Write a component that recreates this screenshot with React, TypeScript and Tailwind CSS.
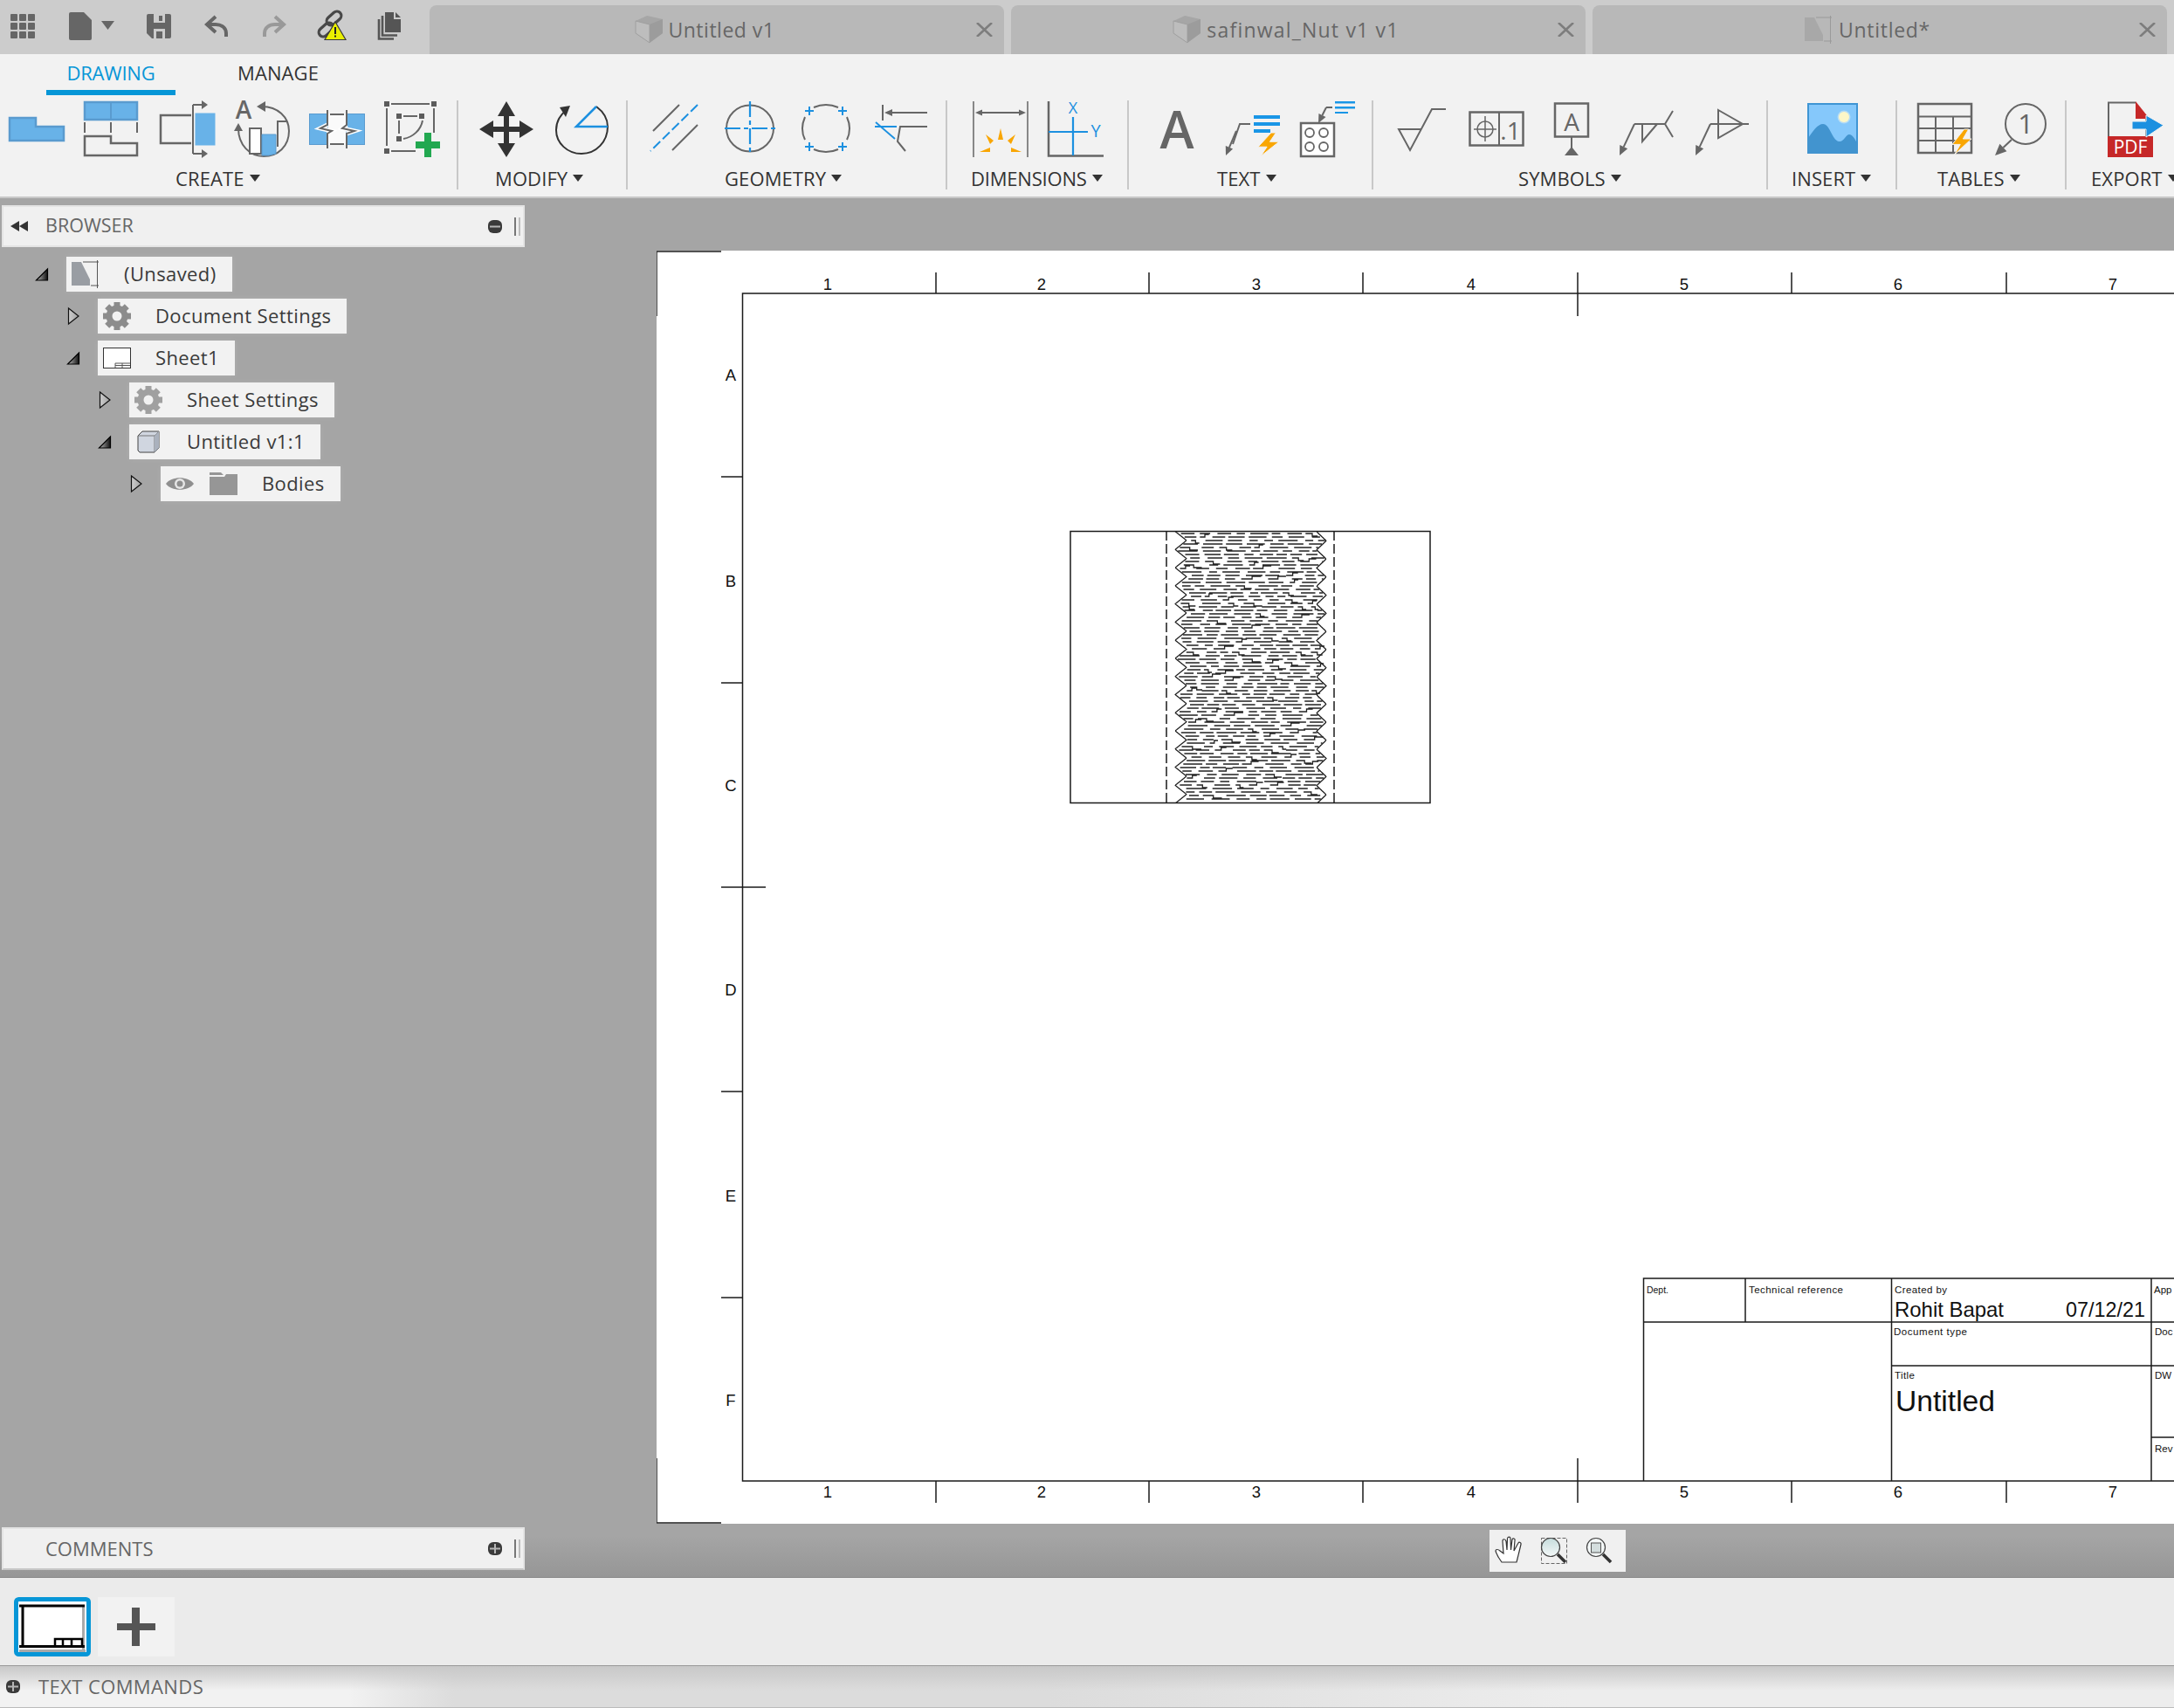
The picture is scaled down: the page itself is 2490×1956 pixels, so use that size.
import React from "react";

const GRAY = "#666666";
const BLUE = "#1c90e0";
const VIEW_BLUE = "#68b2e8";
const VIEW_EDGE = "#5a9bcf";
const ORANGE = "#f9a602";

// plain seeded random so the hatch looks the same on every run
const makeRandom = (seed: number) => () => {
  seed = (seed * 16807) % 2147483647;
  return seed / 2147483647;
};

const PITCH = 20.77;
const leftEdge = (y: number) => {
  const p = (((y - 629.3) % PITCH) + PITCH) % PITCH / PITCH;
  return 1346 + 26 * Math.min(p, 1 - p);
};
const rightEdge = (y: number) => {
  const p = (((y - 619.3) % PITCH) + PITCH) % PITCH / PITCH;
  return 1519 - 22 * Math.min(p, 1 - p);
};

const buildEdge = (edge: (y: number) => number) => {
  let d = "";
  for (let y = 608.5; y <= 919.5; y += 1) {
    d += `${d ? "L" : "M"}${edge(y).toFixed(1)} ${y} `;
  }
  return d;
};

const buildHatch = () => {
  const rnd = makeRandom(48271);
  let d = "";
  for (let y = 611; y < 919; y += 4) {
    const end = rightEdge(y) - 1;
    let x = leftEdge(y) + 1 + rnd() * 7;
    while (x < end) {
      const x2 = Math.min(x + 9 + rnd() * 14, end);
      const roll = rnd();
      const yy = y.toFixed(1);
      if (roll < 0.14 && x2 - x > 8) {
        const mid = x + (x2 - x) * 0.55;
        const step = rnd() < 0.5 ? 3 : -3;
        d += `M${x.toFixed(1)} ${yy}H${mid.toFixed(1)}v${step}H${x2.toFixed(1)}`;
      } else {
        d += `M${x.toFixed(1)} ${yy}H${x2.toFixed(1)}`;
      }
      x = x2 + 3 + rnd() * 6;
    }
  }
  return d;
};

const Leader = ({ x1, y1, x2, y2, color = GRAY, size = 10 }: { x1: number; y1: number; x2: number; y2: number; color?: string; size?: number }) => {
  const a = Math.atan2(y2 - y1, x2 - x1);
  const bx = x2 - Math.cos(a) * size;
  const by = y2 - Math.sin(a) * size;
  const nx = -Math.sin(a) * size * 0.45;
  const ny = Math.cos(a) * size * 0.45;
  return (
    <>
      <line x1={x1} y1={y1} x2={bx} y2={by} stroke={color} strokeWidth={2} />
      <polygon points={`${x2},${y2} ${bx + nx},${by + ny} ${bx - nx},${by - ny}`} fill={color} />
    </>
  );
};

const Bolt = ({ x, y, w, h }: { x: number; y: number; w: number; h: number }) => {
  const pts = [
    [0.62, 0],
    [0, 0.6],
    [0.42, 0.6],
    [0.12, 1],
    [1, 0.38],
    [0.56, 0.38],
    [0.85, 0],
  ]
    .map(([a, b]) => `${x + a * w},${y + b * h}`)
    .join(" ");
  return <polygon points={pts} fill={ORANGE} stroke="#f2f2f2" strokeWidth={1} />;
};

const Caret = () => (
  <svg width={12} height={10} viewBox="0 0 12 10" className="ml-[6px] shrink-0">
    <polygon points="0,1 12,1 6,9" fill="#333333" />
  </svg>
);

const Panel = ({ x, w, label, labelClass, children }: { x: number; w: number; label: string; labelClass: string; children: React.ReactNode }) => (
  <div className="flex flex-col shrink-0">
    <svg width={w} height={70} viewBox={`${x} 115 ${w} 70`} className="block font-['Open_Sans']">
      {children}
    </svg>
    <div className={`flex items-center h-[32px] mt-[3px] text-[22px] text-[#333333] whitespace-nowrap ${labelClass}`}>
      {label}
      <Caret />
    </div>
  </div>
);

const Sep = () => <div className="w-[2px] h-[102px] bg-[#c8c8c8] shrink-0" />;

const TopIcons = () => (
  <svg width={492} height={62} viewBox="0 0 492 62" className="block shrink-0">
    {[0, 1, 2].map((r) =>
      [0, 1, 2].map((c) => <rect key={`${r}${c}`} x={12 + c * 10} y={16 + r * 10} width={8} height={8} rx={1} fill={GRAY} />)
    )}
    <path d="M81 14H96L105 23V44A2 2 0 0 1 103 46H81A2 2 0 0 1 79 44V16A2 2 0 0 1 81 14Z" fill={GRAY} />
    <polygon points="116,24 131,24 123.5,34" fill={GRAY} />
    <path d="M170 16H194A2 2 0 0 1 196 18V42A2 2 0 0 1 194 44H174L168 38V18A2 2 0 0 1 170 16Z" fill={GRAY} />
    <rect x="176" y="16" width="13" height="10" fill="#cccccc" />
    <rect x="182" y="18" width="4" height="6" fill={GRAY} />
    <rect x="176" y="33" width="13" height="11" fill="#cccccc" />
    <rect x="179" y="36" width="7" height="8" fill={GRAY} />
    <path d="M259 42V38C259 32 254 28 247 28H238M247 19L237 28L247 37" fill="none" stroke={GRAY} strokeWidth="4" />
    <path d="M303 42V38C303 32 308 28 315 28H324M315 19L325 28L315 37" fill="none" stroke="#999999" strokeWidth="4" />
    <rect x="364" y="29" width="19" height="10" rx="5" fill="none" stroke="#484848" strokeWidth="3.200" transform="rotate(-42 373.500 34)" />
    <rect x="373" y="16" width="19" height="10" rx="5" fill="none" stroke="#484848" strokeWidth="3.200" transform="rotate(-42 382.500 21)" />
    <polygon points="384,25 396,45.500 372,45.500" fill="#e9f000" stroke="#3a3a3a" strokeWidth="1.200" />
    <rect x="383" y="31" width="2" height="8" fill="#222222" />
    <rect x="383" y="40.500" width="2" height="2" fill="#222222" />
    <path d="M441 14H451V22H459V37H441Z" fill="#555555" />
    <polygon points="453,14 459,20 453,20" fill="#555555" />
    <path d="M438 18V40.500H455M434 22V44.500H451" fill="none" stroke="#555555" strokeWidth="2.600" />
  </svg>
);

const CubeTabIcon = () => (
  <svg width={32} height={32} viewBox="0 0 32 32" className="shrink-0">
    <polygon points="1,6 14,0 32,4 32,20 17,31 1,20" fill="#a6a6a6" />
    <polygon points="1,6 17,10 17,31 1,20" fill="#bdbdbd" stroke="#a0a0a0" strokeWidth="1" />
    <polygon points="17,10 32,4 32,20 17,31" fill="#9c9c9c" />
  </svg>
);

const DrawingIcon = ({ fill, line }: { fill: string; line: string }) => (
  <svg width={32} height={32} viewBox="0 0 32 32" className="shrink-0">
    <polygon points="0,2 11,2 21,22 21,29 0,29" fill={fill} />
    <path d="M13 2H31M29.500 0V32M22 29H31" fill="none" stroke={line} strokeWidth="1" />
  </svg>
);

const CloseX = () => (
  <svg width={19} height={16} viewBox="0 0 19 16" className="shrink-0 mr-[13px]">
    <path d="M1 0L18 16M18 0L1 16" stroke="#7d7d7d" strokeWidth="2.600" />
  </svg>
);

const DocTab = ({ icon, title, titleClass }: { icon: React.ReactNode; title: string; titleClass: string }) => (
  <div className="w-[658px] h-[56px] shrink-0 flex items-center pl-[4px] bg-[#b8b8b8] rounded-t-[8px]">
    <div className="flex-1 flex items-center justify-center gap-[7px] text-[23px] text-[#666666]">
      {icon}
      <span className={titleClass}>{title}</span>
    </div>
    <CloseX />
  </div>
);

const Gear = ({ color }: { color: string }) => (
  <svg width={32} height={32} viewBox="0 0 32 32" className="shrink-0">
    {[0, 45, 90, 135, 180, 225, 270, 315].map((a) => (
      <rect key={a} x="12.500" y="0" width="7" height="8" fill={color} transform={`rotate(${a} 16 16)`} />
    ))}
    <circle cx="16" cy="16" r="9" fill="none" stroke={color} strokeWidth="7" />
  </svg>
);

const SheetIcon = () => (
  <svg width={32} height={24} viewBox="0 0 32 24" className="shrink-0">
    <rect x="0.500" y="0.500" width="31" height="23" fill="#ffffff" stroke="#333333" strokeWidth="1" />
    <path d="M14 23V18H31M14 20.500H31M22 18V23" fill="none" stroke="#555555" strokeWidth="1" />
  </svg>
);

const BodyIcon = () => (
  <svg width={26} height={26} viewBox="0 0 26 26" className="shrink-0 ml-[3px] mr-[3px]">
    <polygon points="1,6 6,1 25,1 25,20 20,25 3,25 1,23" fill="#d0d6e0" stroke="#444444" strokeWidth="1" />
    <path d="M1 6H20L25 1M20 6V25" fill="none" stroke="#777777" strokeWidth="1" />
    <polygon points="20,6 25,1 25,20 20,25" fill="#aab1bd" />
  </svg>
);

const EyeIcon = () => (
  <svg width={32} height={20} viewBox="0 0 32 20" className="shrink-0">
    <path d="M0 10C6 1 26 1 32 10C26 19 6 19 0 10Z" fill="#8f8f8f" />
    <circle cx="16" cy="10" r="6" fill="#e6e6e6" />
    <circle cx="16" cy="10" r="3.500" fill="#8f8f8f" />
  </svg>
);

const FolderIcon = () => (
  <svg width={32} height={26} viewBox="0 0 32 26" className="shrink-0">
    <path d="M0 0H13L16 3H0ZM0 5H17L19 2H32V26H0Z" fill="#969696" />
  </svg>
);

const TreeCaret = ({ open }: { open: boolean }) => (
  <svg width={36} height={40} viewBox="0 0 36 40" className="shrink-0">
    <defs>
      <linearGradient id="openFill" x1="0" y1="0" x2="1" y2="0">
        <stop offset="0" stopColor="#bbbbbb" />
        <stop offset="1" stopColor="#111111" />
      </linearGradient>
      <linearGradient id="closedFill" x1="0" y1="0" x2="1" y2="0">
        <stop offset="0" stopColor="#cfcfcf" />
        <stop offset="1" stopColor="#a0a0a0" />
      </linearGradient>
    </defs>
    {open ? (
      <polygon points="1.500,27 14.500,27 14.500,14" fill="url(#openFill)" stroke="#000000" strokeWidth="1.200" />
    ) : (
      <polygon points="2.500,11 14,20 2.500,29" fill="url(#closedFill)" stroke="#111111" strokeWidth="1.200" />
    )}
  </svg>
);

const TreeRow = ({ indent, open, icon, label }: { indent: string; open: boolean; icon: React.ReactNode; label: string }) => (
  <div className={`flex items-center h-[40px] ${indent}`}>
    <TreeCaret open={open} />
    <div className="flex items-center h-[40px] pl-[6px] pr-[18px] bg-[#f2f2f2] shadow-[0_0_6px_rgba(255,255,255,0.12)]">
      {icon}
      <span className="ml-[28px] pb-[2px] text-[22px] tracking-[0.4px] text-[#3a3a3a] whitespace-nowrap">{label}</span>
    </div>
  </div>
);

const Badge = ({ plus }: { plus: boolean }) => (
  <svg width={16} height={15} viewBox="0 0 16 15" className="shrink-0">
    <rect x="0" y="0" width="16" height="15" rx="6" fill="#3a3a3a" />
    <rect x="2" y="6.500" width="12" height="2" fill="#b5b5b5" />
    {plus && <rect x="7" y="2" width="2" height="11" fill="#b5b5b5" />}
  </svg>
);

const PanelHandle = () => (
  <div className="flex h-[21px] ml-[14px] gap-[3px]">
    <div className="w-[2px] bg-[#777777]" />
    <div className="w-[2px] bg-[#bdbdbd]" />
  </div>
);

const SheetDrawing = () => {
  const colX = [1072, 1316, 1561, 1807, 2052, 2298];
  const nums = [
    [948, "1"],
    [1193, "2"],
    [1439, "3"],
    [1685, "4"],
    [1929, "5"],
    [2174, "6"],
    [2420, "7"],
  ] as [number, string][];
  const rows = [
    [429, "A"],
    [665, "B"],
    [899, "C"],
    [1133, "D"],
    [1369, "E"],
    [1603, "F"],
  ] as [number, string][];
  const rowY = [546, 782, 1250, 1486];
  return (
    <svg width={1738} height={1458} viewBox="752 287 1738 1458" className="block bg-white font-['Liberation_Sans']">
      <g fill="none" stroke="#1a1a1a" strokeWidth="1.500">
        <path d="M826 288H752V362M752 1670V1744H826" />
        <path d="M2490 336H850.500V1696H2490" />
        {colX.map((x) => (
          <React.Fragment key={x}>
            <path d={x === 1807 ? `M${x} 312V362` : `M${x} 312V336`} />
            <path d={x === 1807 ? `M${x} 1670V1721` : `M${x} 1696V1721`} />
          </React.Fragment>
        ))}
        {rowY.map((y) => (
          <path key={y} d={`M826 ${y}H850`} />
        ))}
        <path d="M826 1016H877" />
        <rect x="1226" y="608.500" width="412" height="311" />
        <path d="M1336 608V920M1528 608V920" strokeDasharray="11 4" />
        <path d={buildEdge(leftEdge)} strokeWidth="1.200" />
        <path d={buildEdge(rightEdge)} strokeWidth="1.200" />
        <path d={buildHatch()} strokeWidth="1.300" stroke="#222222" />
        <path d="M1882.500 1696V1464H2490M1882.500 1514H2490M2166.500 1564H2490M2464 1646H2490M1999 1464V1514M2166.500 1464V1696M2464 1464V1696" />
      </g>
      <g fontSize="18.500" textAnchor="middle" fill="#111111">
        {nums.map(([x, t]) => (
          <React.Fragment key={t}>
            <text x={x} y={332}>{t}</text>
            <text x={x} y={1715}>{t}</text>
          </React.Fragment>
        ))}
        {rows.map(([y, t]) => (
          <text key={t} x={837} y={y + 7}>{t}</text>
        ))}
      </g>
      <g fill="#111111" fontSize="11.500">
        <text x={1886} y={1481} textLength={25} lengthAdjust="spacingAndGlyphs">Dept.</text>
        <text x={2003} y={1481} textLength={108}>Technical reference</text>
        <text x={2170} y={1481} textLength={60}>Created by</text>
        <text x={2169} y={1529} textLength={84}>Document type</text>
        <text x={2170} y={1579} textLength={23}>Title</text>
        <text x={2467} y={1481}>App</text>
        <text x={2468} y={1529}>Doc</text>
        <text x={2468} y={1579}>DW</text>
        <text x={2468} y={1663}>Rev</text>
        <text x={2170} y={1508} fontSize="24" textLength={125} lengthAdjust="spacingAndGlyphs">Rohit Bapat</text>
        <text x={2366} y={1508} fontSize="24" textLength={91} lengthAdjust="spacingAndGlyphs">07/12/21</text>
        <text x={2171} y={1616} fontSize="33" textLength={114} lengthAdjust="spacingAndGlyphs">Untitled</text>
      </g>
    </svg>
  );
};

const ZoomTools = () => (
  <div className="ml-[954px] mt-[7px] w-[156px] h-[48px] bg-[#f0f0f0]">
    <svg width={156} height={48} viewBox="1706 1752 156 48" className="block">
      <defs>
        <linearGradient id="glass" x1="0" y1="0" x2="0" y2="1">
          <stop offset="0" stopColor="#c5dcdc" />
          <stop offset="1" stopColor="#f4f8f8" />
        </linearGradient>
      </defs>
      <path
        d="M1720 1789C1717 1785 1714 1780 1713 1776C1713 1774 1716 1774 1718 1776L1722 1779L1721 1765C1721 1762 1724 1762 1725 1765L1726 1775L1726.500 1762C1727 1759.500 1730 1759.500 1730 1762L1730.500 1775L1732 1763C1733 1761 1735.500 1762 1735 1764L1734 1776L1739 1767C1740 1765.500 1742.500 1766.500 1742 1768.500C1741 1773 1739 1781 1738 1785L1737 1789Z"
        fill="#ffffff"
        stroke="#333333"
        strokeWidth="1.200"
      />
      <rect x="1765.500" y="1761.500" width="29" height="29" fill="none" stroke="#666666" strokeWidth="1" strokeDasharray="4 2" />
      <circle cx="1776" cy="1772" r="10.500" fill="url(#glass)" stroke="#444444" strokeWidth="1.200" />
      <path d="M1784 1780L1793 1789" stroke="#333333" strokeWidth="3.500" />
      <circle cx="1828" cy="1772" r="10.500" fill="#f4f8f8" stroke="#444444" strokeWidth="1.200" />
      <rect x="1822.500" y="1767" width="11" height="11" fill="#d4dede" stroke="#555555" strokeWidth="1" />
      <path d="M1836 1780L1845 1789" stroke="#333333" strokeWidth="3.500" />
    </svg>
  </div>
);

const SheetThumb = () => (
  <svg width={88} height={68} viewBox="0 0 88 68" className="block">
    <rect x="2.500" y="2.500" width="83" height="63" rx="3" fill="#ffffff" stroke="#0696d7" strokeWidth="5" />
    <rect x="78" y="10" width="3" height="50" fill="#aaaaaa" />
    <rect x="6" y="60" width="76" height="3" fill="#aaaaaa" />
    <path d="M6 10H81M10 10V56M6 56.500H81" fill="none" stroke="#000000" strokeWidth="3" />
    <path d="M47 56V48H78V56M56 48V56M66 48V56" fill="none" stroke="#000000" strokeWidth="2.500" />
  </svg>
);

const App = () => (
  <div className="w-[2490px] h-[1956px] overflow-hidden flex flex-col font-['Open_Sans',sans-serif] bg-[#a5a5a5]">
    {/* tab bar */}
    <div className="flex h-[62px] bg-[#cccccc] items-end shrink-0">
      <TopIcons />
      <div className="flex gap-[8px]">
        <DocTab icon={<CubeTabIcon />} title="Untitled v1" titleClass="tracking-[0.5px]" />
        <DocTab icon={<CubeTabIcon />} title="safinwal_Nut v1 v1" titleClass="tracking-[1.2px]" />
        <DocTab icon={<DrawingIcon fill="#a8a8a8" line="#9a9a9a" />} title="Untitled*" titleClass="tracking-[0.7px]" />
      </div>
    </div>

    {/* ribbon */}
    <div className="h-[165px] shrink-0 bg-[#f2f2f2] border-b-2 border-[#c8c8c8]">
      <div className="flex h-[53px] text-[22px]">
        <div className="ml-[53px] w-[148px] h-[47px] flex items-center justify-center pt-[1px] border-b-[6px] border-[#0696d7] text-[#0696d7] tracking-[-0.2px]">DRAWING</div>
        <div className="ml-[71px] h-[47px] flex items-center pt-[1px] pb-[6px] text-[#333333] tracking-[0.1px]">MANAGE</div>
      </div>
      <div className="flex">
        <Panel x={0} w={523} label="CREATE" labelClass="pl-[201px] tracking-[0.1px]">
          <polygon points="11,135 41,135 41,145 73,145 73,161 11,161" fill={VIEW_BLUE} stroke={VIEW_EDGE} strokeWidth="2.500" />
          <rect x="97" y="117" width="60" height="20" fill={VIEW_BLUE} stroke={VIEW_EDGE} strokeWidth="2.500" />
          <path d="M127 117V137" stroke={VIEW_EDGE} strokeWidth="2" />
          <path d="M97 140V152M127 140V152M157 140V152" stroke={GRAY} strokeWidth="2" />
          <polygon points="97,156 127,156 127,164 157,164 157,178 97,178" fill="none" stroke={GRAY} strokeWidth="2.500" />
          <path d="M219 132H184V164H219" fill="none" stroke={GRAY} strokeWidth="2.500" />
          <rect x="224" y="130" width="22" height="36" fill={VIEW_BLUE} stroke={VIEW_BLUE} />
          <path d="M221 120V176M221 120H233M221 176H233" fill="none" stroke={GRAY} strokeWidth="2" />
          <polygon points="231,115 238,120 231,125" fill={GRAY} />
          <polygon points="231,171 238,176 231,181" fill={GRAY} />
          <text x={279} y={136} fontSize="28" fontWeight="600" textAnchor="middle" fill={GRAY}>A</text>
          <path d="M300 122C318 122 331 134 331 150C331 168 318 179 302 179C286 179 273 166 273 147" fill="none" stroke={GRAY} strokeWidth="2" />
          <polygon points="294,122 304,116 304,128" fill={GRAY} />
          <polygon points="273,141 268,150 278,150" fill={GRAY} />
          <rect x="286" y="147" width="13" height="29" fill="#ffffff" stroke={GRAY} strokeWidth="2" />
          <polygon points="300,154 316,154 316,176 308,178 300,178" fill={VIEW_BLUE} stroke={VIEW_EDGE} />
          <path d="M318 168V139H329" fill="none" stroke={GRAY} strokeWidth="2" />
          <rect x="354.500" y="130.500" width="21" height="35" fill={VIEW_BLUE} stroke={VIEW_EDGE} />
          <rect x="396.500" y="130.500" width="21" height="35" fill={VIEW_BLUE} stroke={VIEW_EDGE} />
          <rect x="376" y="130" width="20" height="36" fill="#fafafa" />
          <path d="M375 143L367 147L380 150L375 153M397 143L392 147L406 150L397 153" fill="none" stroke="#ffffff" strokeWidth="5" />
          <path d="M375 126V143L367 147L380 150L375 153V170M397 126V143L392 147L406 150L397 153V170" fill="none" stroke={GRAY} strokeWidth="2" />
          <path d="M378 131H394M378 165H394" stroke={GRAY} strokeWidth="2" />
          <path d="M443 124V167M448 119H492M497 124V152M448 173H476" fill="none" stroke={GRAY} strokeWidth="2" />
          <path d="M440 116h6v6h-6zM494 116h6v6h-6zM440 170h6v6h-6z" fill="#5c5c5c" />
          <path d="M462 133H478M457 138V153M484 138C482 149 473 157 462 159" fill="none" stroke={GRAY} strokeWidth="2" />
          <path d="M454 130h6v6h-6zM480 130h6v6h-6zM454 156h6v6h-6z" fill="#5c5c5c" />
          <path d="M486 152H494V162H504V170H494V180H486V170H476V162H486Z" fill="#22a850" />
        </Panel>
        <Sep />
        <Panel x={525} w={192} label="MODIFY" labelClass="pl-[42px] tracking-[0.1px]">
          <path d="M580 116L590 133H583V145H595V138L611 148L595 158V151H583V164H590L580 180L570 164H577V151H565V158L549 148L565 138V145H577V133H570Z" fill="#333333" />
          <path d="M696 145C696 162 683 176 666 176C650 176 637 164 637 149C637 139 642 131 648 127" fill="none" stroke="#333333" strokeWidth="2" />
          <path d="M683 122C691 128 696 136 696 145" fill="none" stroke="#333333" strokeWidth="2" />
          <polygon points="653,121 641,123 648,134" fill="#333333" />
          <path d="M696 145H660L683 122" fill="none" stroke={BLUE} strokeWidth="2.500" />
        </Panel>
        <Sep />
        <Panel x={719} w={364} label="GEOMETRY" labelClass="pl-[111px] tracking-[0.1px]">
          <path d="M778 120L748 150M799 143L770 172" stroke={GRAY} strokeWidth="2" />
          <path d="M799 120L745 173" stroke={BLUE} strokeWidth="2" strokeDasharray="11 4" />
          <ellipse cx="859" cy="147" rx="27" ry="26.500" fill="none" stroke={GRAY} strokeWidth="2" />
          <path d="M830 147H890M859 116V177" stroke={BLUE} strokeWidth="2.200" strokeDasharray="18 4 5 4" />
          <path d="M932 123C941 119 951 119 960 123M970 134C974 143 974 152 970 160M960 171C951 175 941 175 932 171M922 160C918 152 918 143 922 134" fill="none" stroke={GRAY} strokeWidth="2" />
          <path d="M922 127H932M927 122V132M960 127H970M965 122V132M922 168H932M927 163V173M960 168H970M965 163V173" stroke={BLUE} strokeWidth="2" />
          <path d="M1011 120V138" stroke={GRAY} strokeWidth="2" />
          <Leader x1={1062} y1={129} x2={1013} y2={129} size={9} />
          <path d="M1062 145H1031L1028 162L1037 173" fill="none" stroke={GRAY} strokeWidth="2" />
          <path d="M1002 145H1027M1003 140L1025 159" stroke={BLUE} strokeWidth="2" />
        </Panel>
        <Sep />
        <Panel x={1085} w={206} label="DIMENSIONS" labelClass="pl-[27px] tracking-[-0.2px]">
          <path d="M1115 116V180M1177 116V180" stroke={GRAY} strokeWidth="1.500" />
          <Leader x1={1146} y1={129} x2={1117} y2={129} size={8} />
          <Leader x1={1146} y1={129} x2={1175} y2={129} size={8} />
          <polygon points="1146,147 1149,160 1143,160" fill={ORANGE} />
          <polygon points="1129,154 1138,161 1134,165" fill={ORANGE} />
          <polygon points="1163,154 1158,165 1154,161" fill={ORANGE} />
          <polygon points="1122,174 1134,169 1134,174" fill={ORANGE} />
          <polygon points="1170,174 1158,169 1158,174" fill={ORANGE} />
          <path d="M1201 116V178.500H1264" fill="none" stroke={GRAY} strokeWidth="2.500" />
          <path d="M1229 134V178M1201 151H1246" stroke={BLUE} strokeWidth="2.200" />
          <text x={1229} y={130} fontSize="18" textAnchor="middle" fill={BLUE}>X</text>
          <text x={1255} y={157} fontSize="20" textAnchor="middle" fill={BLUE}>Y</text>
        </Panel>
        <Sep />
        <Panel x={1293} w={278} label="TEXT" labelClass="pl-[101px] tracking-[0.1px]">
          <text x={1348} y={170} fontSize="59" fontWeight="600" textAnchor="middle" fill={GRAY}>A</text>
          <path d="M1432 142H1420L1412 165" fill="none" stroke={GRAY} strokeWidth="2" />
          <Leader x1={1416} y1={150} x2={1404} y2={178} size={10} />
          <rect x="1436" y="132" width="30" height="4" fill="#1a96e6" />
          <rect x="1436" y="140" width="30" height="4" fill="#1a96e6" />
          <rect x="1436" y="148" width="19" height="4" fill="#1a96e6" />
          <Bolt x={1441} y={152} w={24} h={27} />
          <rect x="1490" y="141" width="38" height="38" fill="#ffffff" stroke={GRAY} strokeWidth="2.500" />
          <ellipse cx="1500" cy="152" rx="5" ry="5" fill="none" stroke={GRAY} strokeWidth="1.800" />
          <ellipse cx="1516" cy="152" rx="5" ry="5" fill="none" stroke={GRAY} strokeWidth="1.800" />
          <ellipse cx="1500" cy="168" rx="5" ry="5" fill="none" stroke={GRAY} strokeWidth="1.800" />
          <ellipse cx="1516" cy="168" rx="5" ry="5" fill="none" stroke={GRAY} strokeWidth="1.800" />
          <path d="M1526 123H1519" stroke={GRAY} strokeWidth="2" />
          <Leader x1={1519} y1={123} x2={1510} y2={141} size={10} />
          <rect x="1529" y="116" width="23" height="2.500" fill="#1a96e6" />
          <rect x="1529" y="122" width="23" height="2.500" fill="#1a96e6" />
          <rect x="1529" y="128" width="15" height="2" fill="#1a96e6" />
        </Panel>
        <Sep />
        <Panel x={1573} w={450} label="SYMBOLS" labelClass="pl-[166px] tracking-[0.1px]">
          <path d="M1656 125H1640L1615 172L1602 148H1628" fill="none" stroke={GRAY} strokeWidth="2" />
          <rect x="1683.500" y="128.500" width="61" height="38" fill="none" stroke={GRAY} strokeWidth="2.500" />
          <path d="M1717 128V167" stroke={GRAY} strokeWidth="2" />
          <ellipse cx="1701" cy="148" rx="9" ry="9" fill="none" stroke={GRAY} strokeWidth="1.500" />
          <path d="M1688 148H1714M1701 133V162" stroke={GRAY} strokeWidth="1.500" />
          <text x={1730} y={160} fontSize="28" textAnchor="middle" fill={GRAY}>.1</text>
          <rect x="1781" y="118.500" width="38" height="38" fill="none" stroke={GRAY} strokeWidth="2.500" />
          <text x={1800} y={150} fontSize="28" textAnchor="middle" fill={GRAY}>A</text>
          <path d="M1800 157V170" stroke={GRAY} strokeWidth="2" />
          <polygon points="1800,168 1808,178 1792,178" fill={GRAY} />
          <path d="M1907 142H1872" stroke={GRAY} strokeWidth="2" />
          <Leader x1={1872} y1={142} x2={1855} y2={178} size={11} />
          <path d="M1881 142V162L1898 142M1907 142L1916 127M1907 142L1916 157" fill="none" stroke={GRAY} strokeWidth="2" />
          <path d="M2003 142H1959" stroke={GRAY} strokeWidth="2" />
          <Leader x1={1959} y1={142} x2={1942} y2={178} size={11} />
          <polygon points="1968,126 1996,142 1968,158" fill="none" stroke={GRAY} strokeWidth="2" />
        </Panel>
        <Sep />
        <Panel x={2025} w={146} label="INSERT" labelClass="pl-[27px] tracking-[0.1px]">
          <rect x="2071" y="119" width="56" height="56" fill="#85c8fb" stroke="#3f95d4" strokeWidth="2" />
          <circle cx="2112" cy="134" r="7.500" fill="#b6dcf5" />
          <circle cx="2112" cy="134" r="6" fill="#fdf7c8" />
          <path d="M2070 176V160C2076 150 2082 142 2088 142C2096 142 2098 160 2106 162C2112 163 2114 154 2118 154C2122 154 2125 160 2128 166V176Z" fill="#4294cf" />
        </Panel>
        <Sep />
        <Panel x={2173} w={192} label="TABLES" labelClass="pl-[46px] tracking-[0.1px]">
          <rect x="2197" y="119" width="61" height="56" fill="none" stroke={GRAY} strokeWidth="2.500" />
          <path d="M2196 133.500H2258M2196 147H2258M2196 161H2258M2217 134V175M2237 134V175" stroke={GRAY} strokeWidth="2" />
          <Bolt x={2236} y={148} w={22} h={29} />
          <circle cx="2320" cy="142" r="23" fill="none" stroke={GRAY} strokeWidth="2" />
          <text x={2320} y={153} fontSize="31" textAnchor="middle" fill={GRAY}>1</text>
          <Leader x1={2304} y1={160} x2={2285} y2={178} size={13} />
        </Panel>
        <Sep />
        <Panel x={2367} w={123} label="EXPORT" labelClass="pl-[28px] tracking-[0.1px]">
          <path d="M2446 117.500H2415V157M2458 157V136" fill="none" stroke={GRAY} strokeWidth="2" />
          <polygon points="2446,116 2462,136 2446,136" fill="#c62828" />
          <rect x="2414" y="156" width="52" height="24" fill="#c62828" />
          <text x={2440} y={176} fontSize="21" textAnchor="middle" fill="#ffffff">PDF</text>
          <polygon points="2442,139 2458,139 2458,132 2478,143.500 2458,157 2458,148 2442,148" fill="#1c90e0" stroke="#f2f2f2" strokeWidth="1" />
        </Panel>
      </div>
    </div>

    {/* workspace */}
    <div className="flex h-[1580px] shrink-0 border-b border-[#888888] bg-[linear-gradient(to_bottom,#a5a5a5_97%,#969696_100%)]">
      <div className="w-[752px] shrink-0 flex flex-col justify-between pt-[8px] pb-[8px] pl-[2px]">
        <div>
          <div className="w-[599px] h-[48px] flex items-center bg-[#f0f0f0] border-2 border-[#e4e4e4]">
            <svg width={20} height={12} viewBox="0 0 20 12" className="ml-[8px] shrink-0">
              <polygon points="0,6 10,0 10,12" fill="#333333" />
              <polygon points="10,6 20,0 20,12" fill="#333333" />
            </svg>
            <span className="ml-[20px] pb-[2px] text-[21.500px] text-[#666666]">BROWSER</span>
            <div className="flex-1" />
            <Badge plus={false} />
            <PanelHandle />
            <div className="w-[3px]" />
          </div>
          <div className="mt-[11px] flex flex-col gap-[8px] -ml-[2px]">
            <TreeRow indent="ml-[40px]" open icon={<DrawingIcon fill="#999da3" line="#555555" />} label="(Unsaved)" />
            <TreeRow indent="ml-[76px]" open={false} icon={<Gear color="#8c8c8c" />} label="Document Settings" />
            <TreeRow indent="ml-[76px]" open icon={<SheetIcon />} label="Sheet1" />
            <TreeRow indent="ml-[112px]" open={false} icon={<Gear color="#a0a0a0" />} label="Sheet Settings" />
            <TreeRow indent="ml-[112px]" open icon={<BodyIcon />} label="Untitled v1:1" />
            <TreeRow
              indent="ml-[148px]"
              open={false}
              icon={
                <div className="flex items-center gap-[18px]">
                  <EyeIcon />
                  <FolderIcon />
                </div>
              }
              label="Bodies"
            />
          </div>
        </div>
        <div className="w-[599px] h-[49px] flex items-center bg-[#f0f0f0] border-2 border-[#e4e4e4] border-b-[#c8c8c8]">
          <span className="ml-[48px] text-[22px] text-[#666666]">COMMENTS</span>
          <div className="flex-1" />
          <Badge plus />
          <PanelHandle />
          <div className="w-[3px]" />
        </div>
      </div>
      <div className="flex-1 pt-[60px]">
        <SheetDrawing />
        <ZoomTools />
      </div>
    </div>

    {/* sheet strip */}
    <div className="h-[101px] shrink-0 flex items-start gap-[8px] pl-[16px] pt-[22px] bg-[#ebebeb] border-b border-[#999999]">
      <SheetThumb />
      <div className="w-[88px] h-[68px] flex items-center justify-center bg-[#f2f2f2]">
        <svg width={44} height={44} viewBox="0 0 44 44">
          <path d="M17 0H26V18H44V26H26V44H17V26H0V18H17Z" fill="#555555" />
        </svg>
      </div>
    </div>

    {/* text commands */}
    <div className="flex-1 flex items-center pl-[7px] border-b border-[#bbbbbb] bg-[linear-gradient(to_bottom,#c8c8c8,transparent_60%),linear-gradient(to_right,#f2f2f2_0,#f2f2f2_400px,#dcdcdc_520px,#dcdcdc_1200px,#ededed_1800px)]">
      <Badge plus />
      <span className="ml-[21px] text-[22px] tracking-[0.4px] text-[#666666]">TEXT COMMANDS</span>
    </div>
  </div>
);

export default App;
